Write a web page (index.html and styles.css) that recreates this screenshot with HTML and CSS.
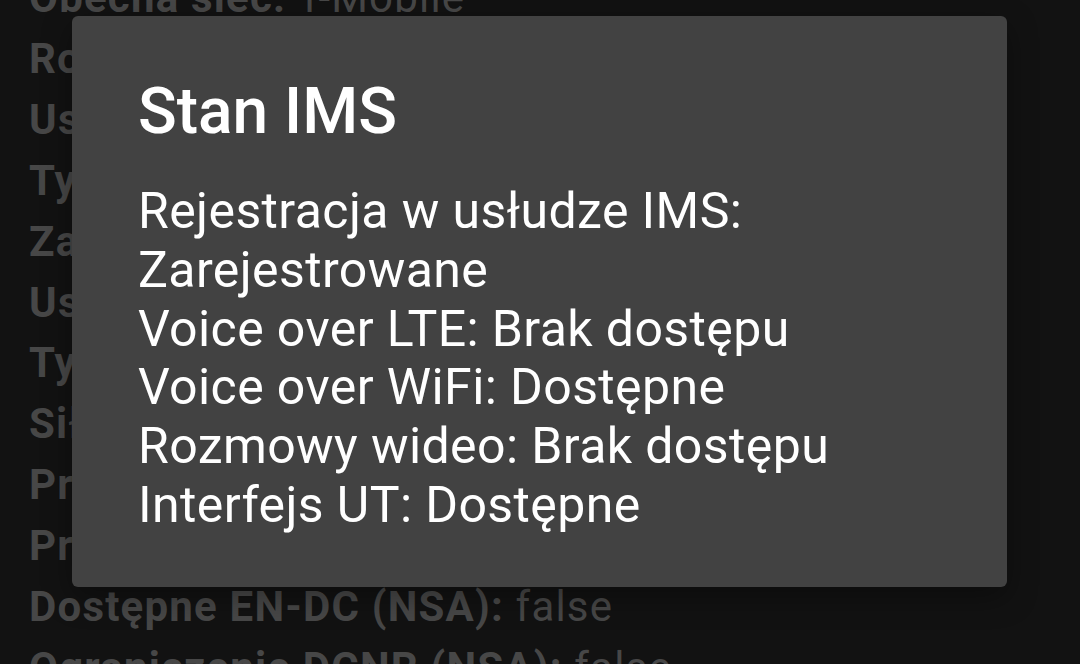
FILE: index.html
```html
<!DOCTYPE html>
<html lang="pl">

<head>
  <meta charset="UTF-8">
  <meta name="viewport" content="width=device-width, initial-scale=1.0">
  <title>Stan IMS</title>
  <link rel="stylesheet" href="styles.css">
</head>

<body>
  <div class="info-list">
    <p><b>Obecna sieć:</b> T-Mobile</p>
    <p><b>Roaming:</b> Bez roamingu</p>
    <p><b>Usługa transmisji danych:</b> Połączono</p>
    <p><b>Typ sieci transmisji danych:</b> LTE</p>
    <p><b>Zastąpienie typu sieci:</b> NR NSA</p>
    <p><b>Usługa głosowa:</b> W użyciu</p>
    <p><b>Typ sieci głosowej:</b> LTE</p>
    <p><b>Siła sygnału:</b> -97 dBm 43 asu</p>
    <p><b>Preferowany typ sieci:</b> NR/LTE/GSM/WCDMA</p>
    <p><b>Przepustowość pobierania (kb/s):</b> 20000</p>
    <p><b>Dostępne EN-DC (NSA):</b> false</p>
    <p><b>Ograniczenie DCNR (NSA):</b> false</p>
  </div>

  <div class="scrim"></div>

  <div class="dialog">
    <h2 class="dialog-title">Stan IMS</h2>
    <div class="dialog-body">
      Rejestracja w usłudze IMS:<br>
      Zarejestrowane<br>
      Voice over LTE: Brak dostępu<br>
      Voice over WiFi: Dostępne<br>
      Rozmowy wideo: Brak dostępu<br>
      Interfejs UT: Dostępne
    </div>
  </div>
</body>

</html>
```

FILE: styles.css
```css
html,
body {
  margin: 0;
  padding: 0;
  height: 100%;
  overflow: hidden;
}

body {
  background-color: #121212;
  font-family: Roboto, "Noto Sans", sans-serif;
  color: #474747;
}

.info-list {
  margin-top: -32px;
  padding-left: 29px;
}

.info-list p {
  margin: 0;
  font-size: 42px;
  line-height: 60.9px;
  letter-spacing: 1.2px;
  white-space: nowrap;
}

.info-list b {
  font-weight: 700;
}

.scrim {
  position: fixed;
  inset: 0;
}

.dialog {
  position: absolute;
  top: 16px;
  left: 72px;
  width: 935px;
  box-sizing: border-box;
  padding: 58px 66px 52px 66px;
  background-color: #424242;
  border-radius: 6px;
  box-shadow: 0 10px 30px rgba(0, 0, 0, 0.35);
  color: #ffffff;
}

.dialog-title {
  margin: 0 0 32px 0;
  font-size: 64px;
  font-weight: 500;
  line-height: 76px;
}

.dialog-body {
  font-size: 50px;
  line-height: 58.8px;
  letter-spacing: 0.4px;
}
```
